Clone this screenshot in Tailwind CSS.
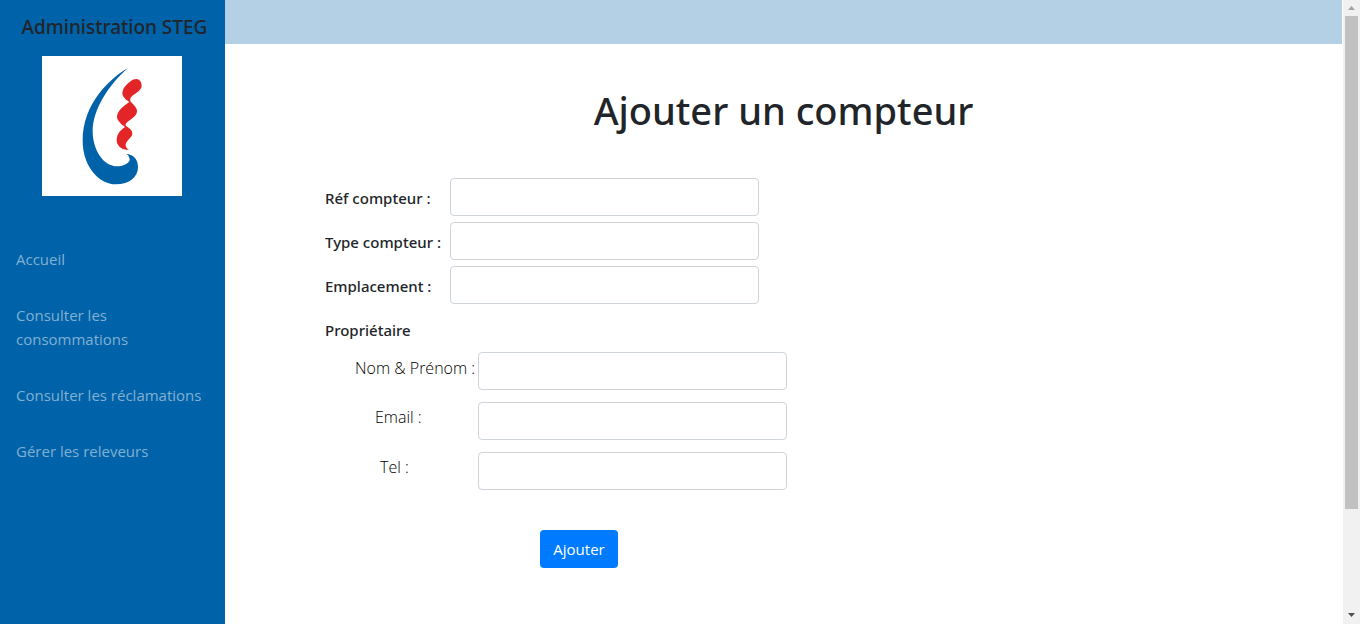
<!DOCTYPE html>
<html lang="fr">
<head>
<meta charset="utf-8">
<meta name="viewport" content="width=device-width, initial-scale=1">
<title>Administration STEG</title>
<script src="https://cdn.jsdelivr.net/npm/@tailwindcss/browser@4"></script>
</head>
<body class="flex min-h-screen bg-white font-['Segoe_UI','Open_Sans',sans-serif] text-[15px] leading-6 text-[#212529]">
  <aside class="w-[225px] shrink-0 bg-[#0062a8]">
    <h2 class="pt-[15px] pl-1 text-center font-['Segoe_UI','Noto_Sans',sans-serif] text-[19px] leading-6 font-medium">Administration STEG</h2>
    <svg class="mt-[17px] ml-[42px] block size-[140px] bg-white" viewBox="126 168 420 420" role="img" aria-label="STEG">
      <path fill="#0062a8" d="M384 204C330 235 248 310 248 422C248 500 298 553 347 553C390 553 414 530 414 501C414 475 398 463 379 461C387 466 391 476 388 483C384 492 366 499 352 499C310 499 278 450 278 393C278 330 325 255 384 204Z"/>
      <path fill="#e42527" d="M390 245C397 239 403 237 409 237C419 237 425 247 425 257C425 270 408 279 397 287C390 293 389 298 392 305C403 315 411 325 411 332C411 347 398 353 387 362C378 369 374 373 379 379C391 386 397 393 397 400C397 410 388 415 380 426C374 436 377 443 387 449C365 452 350 437 350 420C350 403 361 391 375 381C363 372 351 361 351 351C351 335 368 319 388 306C378 300 367 290 367 280C367 268 376 255 390 245Z"/>
    </svg>
    <nav class="mt-[51px] flex flex-col gap-8 px-4 text-white/50">
      <a href="#">Accueil</a>
      <a href="#">Consulter les<br>consommations</a>
      <a href="#" class="whitespace-nowrap">Consulter les réclamations</a>
      <a href="#">Gérer les releveurs</a>
    </nav>
  </aside>

  <main class="mr-px min-w-0 flex-1">
    <header class="h-11 bg-[#b3d0e5]"></header>
    <h1 class="mt-[42px] text-center font-['Segoe_UI','Noto_Sans',sans-serif] text-[38px] leading-12 font-medium">Ajouter un compteur</h1>
    <form class="mt-11 pl-[100px]">
      <div class="flex flex-col gap-1.5 font-['Segoe_UI','Noto_Sans',sans-serif] font-medium">
        <div class="flex items-center"><label for="ref" class="w-[125px] pt-0.5">Réf compteur :</label><input id="ref" type="text" class="h-[38px] w-[309px] rounded border border-[#ced4da] px-3"></div>
        <div class="flex items-center"><label for="type" class="w-[125px] pt-0.5">Type compteur :</label><input id="type" type="text" class="h-[38px] w-[309px] rounded border border-[#ced4da] px-3"></div>
        <div class="flex items-center"><label for="place" class="w-[125px] pt-0.5">Emplacement :</label><input id="place" type="text" class="h-[38px] w-[309px] rounded border border-[#ced4da] px-3"></div>
      </div>
      <fieldset>
        <legend class="pt-3.5 pb-2.5 font-['Segoe_UI','Noto_Sans',sans-serif] font-medium">Propriétaire</legend>
        <div class="flex flex-col gap-3">
          <div class="flex"><label for="nom" class="w-[153px] pt-1 pl-[30px] text-base font-light whitespace-nowrap text-black">Nom &amp; Prénom :</label><input id="nom" type="text" class="h-[38px] w-[309px] rounded border border-[#ced4da] px-3"></div>
          <div class="flex"><label for="email" class="w-[153px] pt-[3px] pl-[50px] text-base font-light text-black">Email :</label><input id="email" type="email" class="h-[38px] w-[309px] rounded border border-[#ced4da] px-3"></div>
          <div class="flex"><label for="tel" class="w-[153px] pt-[3px] pl-[55px] text-base font-light text-black">Tel :</label><input id="tel" type="tel" class="h-[38px] w-[309px] rounded border border-[#ced4da] px-3"></div>
        </div>
      </fieldset>
      <button type="submit" class="mt-10 ml-[215px] h-[38px] w-[78px] rounded bg-[#007bff] text-white">Ajouter</button>
    </form>
  </main>

  <div class="flex w-[17px] shrink-0 flex-col items-center bg-[#f1f1f1]" aria-hidden="true">
    <svg class="h-4 w-[17px] shrink-0" viewBox="0 0 17 16"><path fill="#a3a3a3" d="M5 10L8.500 6L12 10Z"/></svg>
    <div class="h-[79vh] w-[13px] bg-[#c1c1c1]"></div>
    <svg class="mt-auto h-[17px] w-[17px] shrink-0" viewBox="0 0 17 17"><path fill="#505050" d="M5 6L8.500 10L12 6Z"/></svg>
  </div>
</body>
</html>
